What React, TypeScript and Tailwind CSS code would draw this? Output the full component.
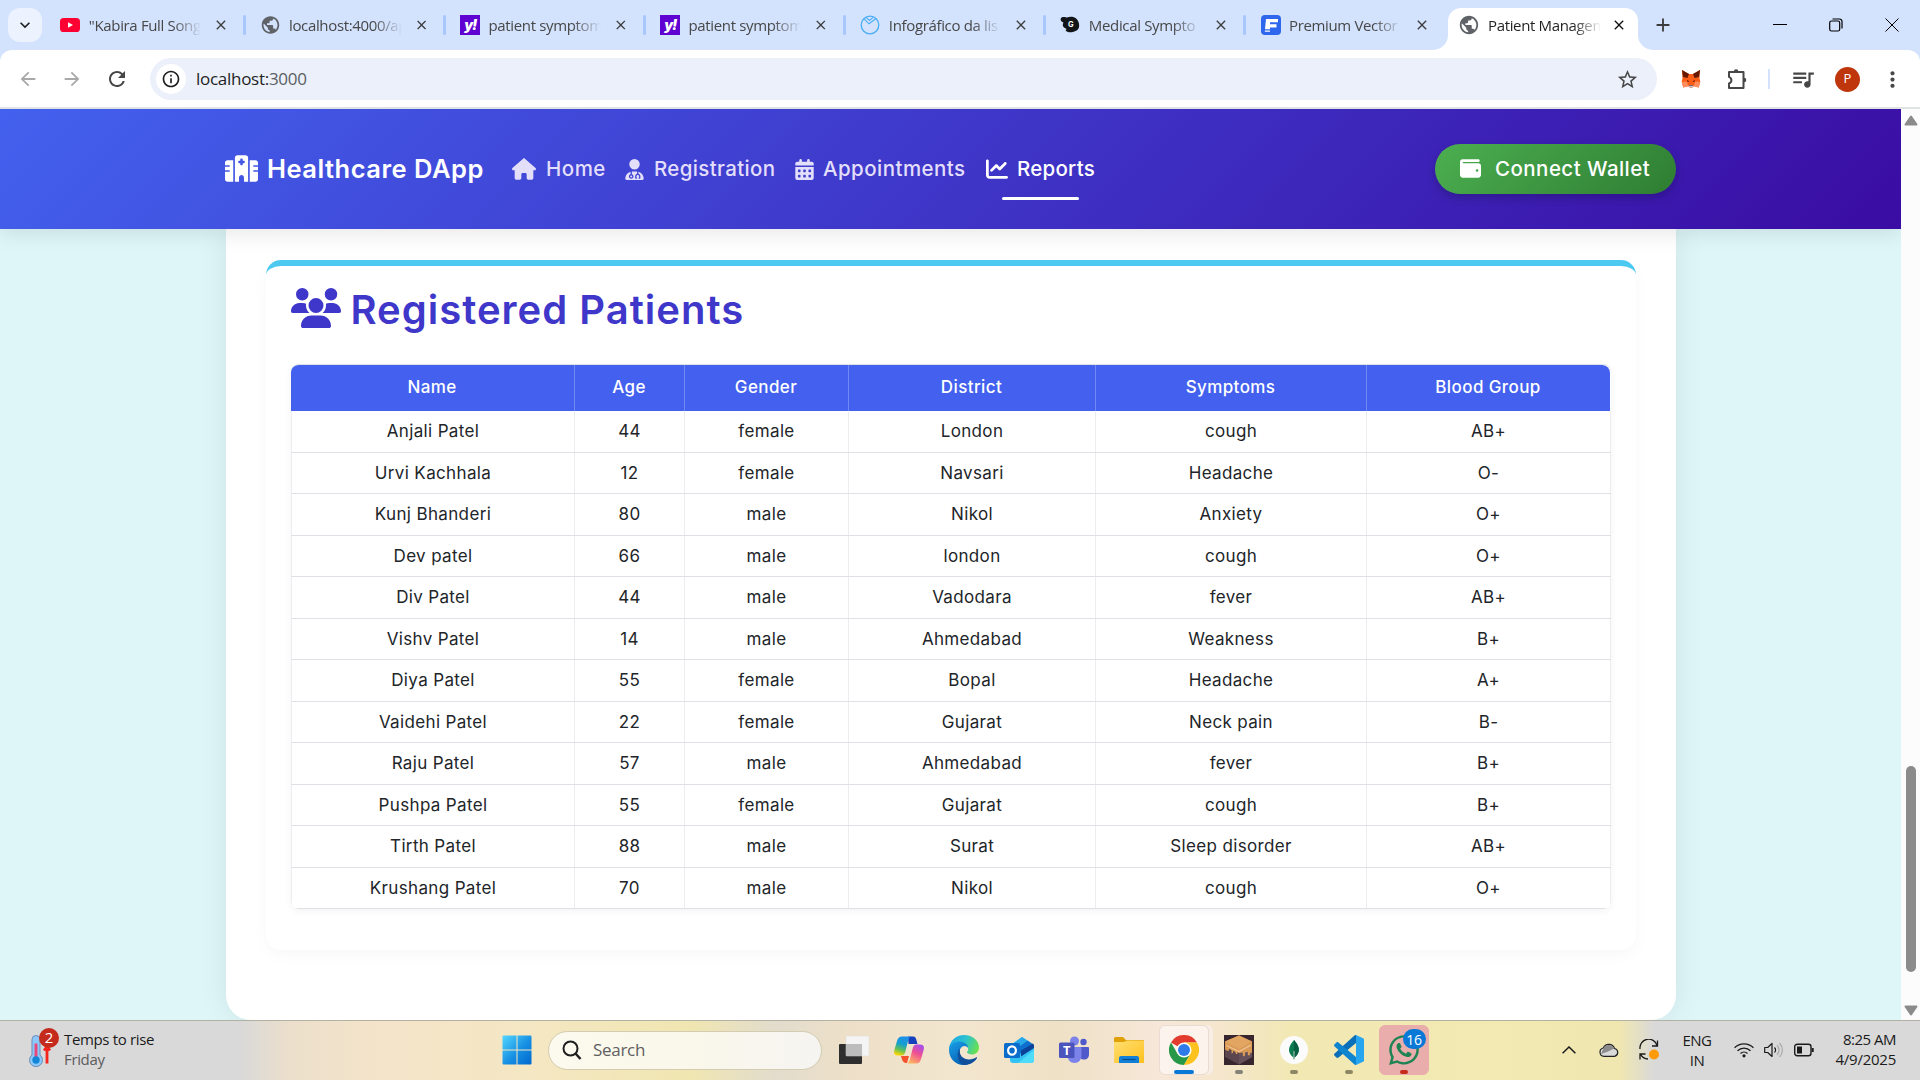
import type { ReactNode } from "react";
import {
  FaCalendarDays,
  FaChartLine,
  FaHospital,
  FaHouse,
  FaUserDoctor,
  FaUsers,
  FaWallet,
  FaWhatsapp,
} from "react-icons/fa6";
import {
  MdAdd,
  MdArrowBack,
  MdArrowForward,
  MdClose,
  MdInfoOutline,
  MdKeyboardArrowDown,
  MdMoreVert,
  MdPublic,
  MdQueueMusic,
  MdRefresh,
  MdStarBorder,
} from "react-icons/md";

/* ---------- favicons ---------- */

const YouTubeIcon = () => (
  <svg viewBox="0 0 20 20" className="size-5">
    <rect y="3" width="20" height="14" rx="3.6" fill="#ff0033" />
    <path d="M8 7.2v5.6l5-2.8z" fill="#fff" />
  </svg>
);

const YahooIcon = () => (
  <div className="flex size-5 items-center justify-center bg-[#5f01d1] pb-0.5 font-['Inter'] text-[14px] font-black italic tracking-[-1px] text-white">
    y!
  </div>
);

const RingIcon = () => (
  <svg viewBox="0 0 20 20" className="size-5" fill="none" stroke="#4badf5" strokeWidth="1.3">
    <circle cx="10" cy="10" r="8.8" />
    <path d="M4 3.800L9 8.800 15.800 3.800M6 2.400L9.500 5.500 13.500 2.200" strokeWidth="1.100" />
  </svg>
);

const BlackBlobIcon = () => (
  <svg viewBox="0 0 20 20" className="size-5">
    <path d="M1 3c2-2 5-.5 6-.4 4-2 10-.6 11.500 4.400 1.500 4 .5 8-3 9-3 1.500-8 2-10-.5 1-.5 1-1 .5-2C2 12.500 2.500 9 3.500 7.500 1.500 7 0 5 1 3z" fill="#111518" />
    <text x="10.800" y="11.500" fontSize="7.500" fontWeight="700" fill="#fff" textAnchor="middle" fontFamily="Inter">G</text>
  </svg>
);

const FreepikIcon = () => (
  <svg viewBox="0 0 20 20" className="size-5">
    <rect width="20" height="20" rx="4" fill="#2f66ee" />
    <path d="M5 4h12v3.300H9v2h6.500v3.200H9v1.700H4z" fill="#fff" />
    <path d="M4 15.500h5v1.300H3.700z" fill="#fff" />
  </svg>
);

const Globe = () => <MdPublic className="size-[22px] text-[#5f6368]" />;

const tabs: { title: string; icon: ReactNode }[] = [
  { title: "\"Kabira Full Song", icon: <YouTubeIcon /> },
  { title: "localhost:4000/ap", icon: <Globe /> },
  { title: "patient symptom", icon: <YahooIcon /> },
  { title: "patient symptom", icon: <YahooIcon /> },
  { title: "Infográfico da lis", icon: <RingIcon /> },
  { title: "Medical Sympto", icon: <BlackBlobIcon /> },
  { title: "Premium Vector", icon: <FreepikIcon /> },
];

function TabTitle({ children, active }: { children: ReactNode; active?: boolean }) {
  return (
    <span
      className={`ml-2 w-[113px] whitespace-nowrap text-[15px] tracking-[-0.35px] mask-r-from-75% mask-r-to-100% ${
        active ? "text-[#1f1f1f]" : "text-[#474747]"
      }`}
    >
      {children}
    </span>
  );
}

function TabStrip() {
  return (
    <div className="flex h-[50px] shrink-0 bg-[#d3e2fd]">
      <div className="ml-2 mt-2 flex size-[34px] items-center justify-center rounded-xl bg-[#ecf2fe]">
        <MdKeyboardArrowDown className="size-5 text-[#1f1f1f]" />
      </div>
      <div className="flex w-[1406px] pl-[4px]">
        {tabs.map((tab, i) => (
          <div key={i} className="flex h-[50px] w-[200px] shrink-0 items-center pl-[14px]">
            <div className="flex w-[21px] justify-center">{tab.icon}</div>
            <TabTitle>{tab.title}</TabTitle>
            <MdClose className="ml-[12px] size-[16px] text-[#3c3c3c]" />
            {i < tabs.length - 1 && <div className="ml-[14px] h-5 w-[3px] rounded bg-[#a8c7fa]" />}
          </div>
        ))}
      </div>
      <div className="relative mt-2 flex h-[42px] w-[190px] items-center rounded-t-[13px] bg-white pb-2 pl-[10px]">
        <svg viewBox="0 0 15 15" className="absolute -left-[15px] bottom-0 size-[15px]">
          <path d="M15 0v15H0A15 15 0 0 0 15 0z" fill="#fff" />
        </svg>
        <svg viewBox="0 0 15 15" className="absolute -right-[15px] bottom-0 size-[15px]">
          <path d="M0 0v15h15A15 15 0 0 1 0 0z" fill="#fff" />
        </svg>
        <Globe />
        <TabTitle active>Patient Managem</TabTitle>
        <MdClose className="ml-[10px] size-[16px] text-[#111]" />
      </div>
      <div className="flex grow items-center">
        <MdAdd className="ml-[14px] size-[22px] text-[#3c3c3c]" />
        <div className="ml-auto flex items-center gap-[42px] pr-[21px] text-black">
          <svg viewBox="0 0 14 14" className="size-[14px]"><path d="M0 6.500h14" stroke="currentColor" /></svg>
          <svg viewBox="0 0 14 14" className="size-[14px]" fill="none" stroke="currentColor" strokeWidth="1.200">
            <rect x=".7" y="3" width="10" height="10" rx="1.800" />
            <path d="M3.500 1h7a2.500 2.500 0 0 1 2.500 2.500v7" />
          </svg>
          <svg viewBox="0 0 14 14" className="size-[14px]"><path d="M.5 .5l13 13M13.500 .5l-13 13" stroke="currentColor" strokeWidth="1" /></svg>
        </div>
      </div>
    </div>
  );
}

const FoxIcon = () => (
  <svg viewBox="0 0 20 20" className="size-5">
    <path d="M1 1l7 4h4l7-4-.5 8 .8 4-1.600 5.500-4.700-1.300-2 1.500H9l-2-1.500-4.700 1.300L.7 13l.8-4z" fill="#ff5c16" />
    <path d="M1 1l7 4-1.500 4L2 8zM19 1l-7 4 1.500 4L18 8z" fill="#661800" />
    <path d="M.7 13L6 12.500 7 17l-4.700 1.500zM19.300 13l-5.300-.5-1 4.500 4.700 1.500z" fill="#ff8d5d" />
    <path d="M6 11l2.500 1.500-2 .3zM14 11l-2.500 1.500 2 .3zM8.300 16h3.400l.3 1.500H8z" fill="#3a0d12" />
    <path d="M7 17l1-.5h4l1 .5-2 1.500H9z" fill="#c0c4cd" />
  </svg>
);

function Toolbar() {
  return (
    <div className="bg-[#d3e2fd]">
      <div className="flex h-[57px] items-center rounded-t-xl bg-white pt-px text-[#474747]">
        <MdArrowBack className="ml-[17px] size-[22px] text-[#a9a9a9]" />
        <MdArrowForward className="ml-[22px] size-[22px] text-[#a9a9a9]" />
        <MdRefresh className="ml-[22px] size-[24px]" />
        <div className="ml-[21px] flex h-[42px] w-[1507px] items-center rounded-full bg-[#ebf0fa] pl-[6px] pr-[18px]">
          <div className="flex size-[30px] items-center justify-center rounded-full bg-white">
            <MdInfoOutline className="size-[20px] text-[#1f1f1f]" />
          </div>
          <span className="ml-[10px] text-[17px] tracking-[-0.28px] text-[#1f1f1f]">
            localhost:<span className="text-[#5a5e63]">3000</span>
          </span>
          <MdStarBorder className="ml-auto size-[23px]" />
        </div>
        <div className="ml-[24px]"><FoxIcon /></div>
        <svg viewBox="0 0 22 22" className="ml-[25px] size-[22px]" fill="none" stroke="currentColor" strokeWidth="2">
          <path d="M3 4h14.500v16H3v-4.500c1.600-.6 2.400-1.800 2.400-3.300S4.600 9.500 3 8.900z" strokeLinejoin="round" />
          <path d="M7.800 3.500a2.300 2.300 0 0 1 4.600 0zM18 9.700a2.300 2.300 0 0 1 0 4.600z" fill="currentColor" stroke="none" />
        </svg>
        <div className="ml-[20px] h-5 w-[2px] bg-[#d3e2fd]" />
        <MdQueueMusic className="ml-[20px] size-[26px]" />
        <div className="ml-[19px] flex size-[25px] items-center justify-center rounded-full bg-[#bf360c] text-[13px] text-white">P</div>
        <MdMoreVert className="ml-[20px] size-[25px]" />
      </div>
      <div className="h-[2px] bg-[#dfe3e3]" />
    </div>
  );
}

/* ---------- web page ---------- */

function NavBar() {
  return (
    <nav className="relative z-10 flex h-[120px] shrink-0 items-center bg-[linear-gradient(135deg,#4361ee,#3a0ca3)] px-[225px] shadow-[0_4px_20px_rgba(0,0,0,0.1)]">
      <FaHospital className="mb-[2px] size-[33px] text-white" />
      <span className="ml-[9px] w-[217px] whitespace-nowrap text-[25.500px] font-semibold tracking-[0.5px] text-white">Healthcare DApp</span>
      <div className="flex grow items-center text-[20.500px] font-medium text-[#e3dffa]">
        <FaHouse className="ml-[28px] size-[24px]" />
        <span className="ml-[10px] w-[60px] tracking-[0.5px]">Home</span>
        <FaUserDoctor className="ml-[18px] size-[21px]" />
        <span className="ml-[9px] w-[121px] tracking-[0.35px]">Registration</span>
        <FaCalendarDays className="ml-[19px] size-[21px]" />
        <span className="ml-[8px] w-[144px] tracking-[0.45px]">Appointments</span>
        <div className="relative ml-[19px] flex items-center text-white">
          <FaChartLine className="size-[22px]" />
          <span className="ml-[9px] w-[78px] tracking-[0.25px]">Reports</span>
          <div className="absolute left-[16px] top-[43px] h-[3px] w-[77px] rounded-full bg-white" />
        </div>
      </div>
      <div className="flex h-[50px] w-[241px] items-center rounded-full bg-[linear-gradient(135deg,#4caf50,#2e7d32)] pl-[25px] text-[20.500px] font-medium text-white shadow-[0_4px_10px_rgba(0,0,0,0.2)]">
        <FaWallet className="mb-px size-[21px]" />
        <span className="ml-[14px] whitespace-nowrap tracking-[0.45px]">Connect Wallet</span>
      </div>
    </nav>
  );
}

const headers = ["Name", "Age", "Gender", "District", "Symptoms", "Blood Group"];
const patients = [
  ["Anjali Patel", "44", "female", "London", "cough", "AB+"],
  ["Urvi Kachhala", "12", "female", "Navsari", "Headache", "O-"],
  ["Kunj Bhanderi", "80", "male", "Nikol", "Anxiety", "O+"],
  ["Dev patel", "66", "male", "london", "cough", "O+"],
  ["Div Patel", "44", "male", "Vadodara", "fever", "AB+"],
  ["Vishv Patel", "14", "male", "Ahmedabad", "Weakness", "B+"],
  ["Diya Patel", "55", "female", "Bopal", "Headache", "A+"],
  ["Vaidehi Patel", "22", "female", "Gujarat", "Neck pain", "B-"],
  ["Raju Patel", "57", "male", "Ahmedabad", "fever", "B+"],
  ["Pushpa Patel", "55", "female", "Gujarat", "cough", "B+"],
  ["Tirth Patel", "88", "male", "Surat", "Sleep disorder", "AB+"],
  ["Krushang Patel", "70", "male", "Nikol", "cough", "O+"],
];

function PatientTable() {
  return (
    <div className="mt-[30px] w-[1320px] overflow-hidden rounded-[8px] border-t border-[#dee2e6] text-center text-[17px] shadow-[0_2px_8px_rgba(0,0,0,0.05)]">
      <div className="grid h-[46px] w-[1319px] grid-cols-[284px_110px_164px_247px_271px_243px] overflow-hidden rounded-tr-[8px] bg-[#4361ee] font-medium tracking-[0.4px] text-white">
        {headers.map((h) => (
          <div key={h} className="flex items-center justify-center border-r border-white/25 pb-px last:border-r-0">{h}</div>
        ))}
      </div>
      {patients.map((row) => (
        <div key={row[0]} className="grid h-[41.500px] grid-cols-[284px_110px_164px_247px_271px_244px] border-b border-[#dee2e6] tracking-[0.35px] text-[#212529]">
          {row.map((cell, i) => (
            <div key={i} className="flex items-center justify-center border-r border-[#ebedf0] pl-px pt-px first:border-l">{cell}</div>
          ))}
        </div>
      ))}
    </div>
  );
}

function PageView() {
  return (
    <div className="flex h-[911px] shrink-0">
      <div className="flex w-[1901px] flex-col overflow-hidden bg-[#def6f8] font-['Inter',sans-serif]">
        <NavBar />
        <main className="mx-auto flex h-[791px] w-[1450px] flex-col rounded-b-[25px] bg-white px-[40px] pt-[31px] shadow-[0_0_30px_rgba(0,0,0,0.08)]">
          <section className="h-[690px] rounded-[15px] border-t-[6px] border-[#4cc9f0] bg-white px-[25px] pt-[14px] shadow-[0_5px_15px_rgba(0,0,0,0.03)]">
            <h2 className="flex h-[54px] items-center gap-[10px] pt-[2px] text-[40px] font-semibold text-[#3f37c9]">
              <FaUsers className="size-[50px]" />
              <span className="whitespace-nowrap pt-[3px] tracking-[1px]">Registered Patients</span>
            </h2>
            <PatientTable />
          </section>
        </main>
      </div>
      <div className="flex grow flex-col items-center bg-[#fcfcfc] pb-[4px] pt-[6px]">
        <svg viewBox="0 0 14 11" className="h-[11px] w-[14px]"><path d="M7 1.500L12.500 9.500H1.500z" fill="#8b8b8b" stroke="#8b8b8b" strokeWidth="2" strokeLinejoin="round" /></svg>
        <div className="mt-[640px] h-[206px] w-[10px] rounded-full bg-[#8b8b8b]" />
        <svg viewBox="0 0 14 11" className="mt-auto h-[11px] w-[14px]"><path d="M7 9.500L12.500 1.500H1.500z" fill="#8b8b8b" stroke="#8b8b8b" strokeWidth="2" strokeLinejoin="round" /></svg>
      </div>
    </div>
  );
}

/* ---------- Windows taskbar ---------- */

const StartIcon = () => (
  <svg viewBox="0 0 30 30" className="size-[30px]">
    <defs>
      <linearGradient id="win" x1="0" y1="0" x2="1" y2="1"><stop stopColor="#54d7ff" /><stop offset=".55" stopColor="#168fe2" /><stop offset="1" stopColor="#0067cf" /></linearGradient>
    </defs>
    <path d="M1.500 .5H14.500V14.500H.5V1.500a1 1 0 0 1 1-1zM15.500 .5h13a1 1 0 0 1 1 1v13h-14zM.5 15.500h14v14h-13a1 1 0 0 1-1-1zM15.500 15.500h14v13a1 1 0 0 1-1 1h-13z" fill="url(#win)" />
  </svg>
);

const TaskViewIcon = () => (
  <svg viewBox="0 0 30 30" className="size-[30px]">
    <rect y="9" width="23" height="20" rx="1" fill="#2e2e2e" />
    <rect x="7" y="1" width="23" height="20" rx="1" fill="#f4f4f4" stroke="#dcdcdc" strokeWidth=".5" />
    <path d="M7 9h16v12H8a1 1 0 0 1-1-1z" fill="#bcbcbc" />
  </svg>
);

const CopilotIcon = () => (
  <svg viewBox="0 0 30 30" className="size-[30px]">
    <defs>
      <linearGradient id="cpA" x1=".6" y1="0" x2=".3" y2="1"><stop stopColor="#1f8fe8" /><stop offset=".4" stopColor="#149fd0" /><stop offset=".7" stopColor="#5cbf5c" /><stop offset="1" stopColor="#ffd500" /></linearGradient>
      <linearGradient id="cpB" x1=".8" y1="0" x2=".3" y2="1"><stop stopColor="#a44cf0" /><stop offset=".45" stopColor="#ee4f94" /><stop offset="1" stopColor="#ffb45e" /></linearGradient>
    </defs>
    <path d="M14 1.500h5c2.500 0 3 2 3.700 4.500L23.500 9h-9z" fill="#153fbd" />
    <path d="M7 21h8l-2 7h-1c-3 0-4-3-5-7z" fill="#f4512c" />
    <path d="M8 1.500h9.500c-2 0-2.800 2-3.500 4.500L11.500 16c-.8 3-1.500 4.500-4 4.500H4c-4 0-4.500-2.500-3.500-6L3 6c1-3 2-4.500 5-4.500z" fill="url(#cpA)" />
    <path d="M22 28.500h-9.500c2 0 2.800-2 3.500-4.500l2.500-10c.8-3 1.500-4.500 4-4.500H26c4 0 4.500 2.500 3.500 6L27 24c-1 3-2 4.500-5 4.500z" fill="url(#cpB)" />
  </svg>
);

const EdgeIcon = () => (
  <svg viewBox="0 0 30 30" className="size-[30px]">
    <defs>
      <linearGradient id="edA" x1="0" y1=".3" x2="1" y2=".6"><stop stopColor="#1fa6e6" /><stop offset=".5" stopColor="#2cc3cf" /><stop offset="1" stopColor="#6be04c" /></linearGradient>
      <linearGradient id="edB" x1="0" y1="0" x2=".6" y2="1"><stop stopColor="#1aa0e8" /><stop offset="1" stopColor="#0560b4" /></linearGradient>
    </defs>
    <path d="M0 14C.5 6 7 0 15 0c9 0 15 6 15 12.500 0 4.500-3.500 7-7 7-3 0-5-1-5-2.200 0-.8 1.200-1.300 1.200-3.300C19.200 10.500 16 8 11 8 5.500 8 1.500 10.500 0 14z" fill="url(#edA)" />
    <path d="M0 15c0-5 5-8.500 10-8.500 5.500 0 9.200 3 9.200 6.500-1-1.300-2.200-2-3.700-2-3 0-5 3-5 6.500 0 6 6 10.500 11 10-2 1.700-4.500 2.500-7 2.500C6 30 0 23 0 15z" fill="url(#edB)" />
    <path d="M11 13.500c-1.500 7 3.500 11 9 11 3 0 5.500-1.200 7-2 .8-.4 1.300.2.900.8C26 26.500 21.500 30 16 30 9 30 6.500 17.500 11 13.500z" fill="#104f9c" />
  </svg>
);

const OutlookIcon = () => (
  <svg viewBox="0 0 30 30" className="size-[30px]">
    <path d="M5 11L18 2l12 8v15a3 3 0 0 1-3 3H9a3 3 0 0 1-3-3z" fill="#33c3f2" />
    <path d="M6 11L18 2l5 3.300L12 14z" fill="#28a8ea" />
    <path d="M12 14L23.500 5.500 30 10v2l-12 8z" fill="#0f6fce" />
    <path d="M17 15.500L29 8.500l1 2v2.500L17 21.500z" fill="#0b4196" />
    <path d="M14 28l16-13v10a3 3 0 0 1-3 3z" fill="#4fdcfa" />
    <rect y="8" width="16" height="15" rx="1.500" fill="#0a6dcc" />
    <ellipse cx="8" cy="15.500" rx="3.900" ry="4.200" fill="none" stroke="#fff" strokeWidth="2.200" />
  </svg>
);

const TeamsIcon = () => (
  <svg viewBox="0 0 30 30" className="size-[30px]">
    <circle cx="24.500" cy="7" r="3.200" fill="#5059c9" />
    <circle cx="15.500" cy="6" r="4.500" fill="#7b83eb" />
    <path d="M20 12h9a1 1 0 0 1 1 1v6.500c0 3-2 5-5 5s-5-2-5-5z" fill="#5059c9" />
    <path d="M9 12h12.500a1 1 0 0 1 1 1v7c0 5-3 8-7 8s-7-3-7-8z" fill="#7b83eb" />
    <rect y="7.500" width="15.500" height="15.500" rx="1.500" fill="#4b53bc" />
    <text x="7.700" y="20" fontSize="13" fontWeight="700" fill="#fff" textAnchor="middle" fontFamily="Open Sans">T</text>
  </svg>
);

const FolderIcon = () => (
  <svg viewBox="0 0 30 30" className="size-[30px]">
    <defs><linearGradient id="fold" x1="0" y1="0" x2="1" y2="1"><stop stopColor="#ffdf72" /><stop offset="1" stopColor="#ffc01f" /></linearGradient></defs>
    <path d="M0 3.500A1.500 1.500 0 0 1 1.500 2H9l3 3h17a1 1 0 0 1 1 1v5H0z" fill="#e0a008" />
    <path d="M0 7h10l3-1.500h17V28H0z" fill="url(#fold)" />
    <path d="M5 28v-5a2 2 0 0 1 2-2h16a2 2 0 0 1 2 2v5z" fill="#1180d6" />
    <path d="M8.500 24.500h13" stroke="#0b4c8a" strokeWidth="1.200" />
  </svg>
);

const ChromeIcon = () => (
  <svg viewBox="0 0 30 30" className="size-[30px]">
    <path d="M15 15L2 7.500A15 15 0 0 1 28 7.500L15 7.500z" fill="#e33b2e" />
    <path d="M2 7.500A15 15 0 0 0 15 30L21.500 18.800 15 15 8.500 18.800z" fill="#279847" />
    <path d="M15 30A15 15 0 0 0 28 7.500H15L21.500 18.800z" fill="#fcc31e" />
    <circle cx="15" cy="15" r="7.500" fill="#fff" />
    <circle cx="15" cy="15" r="6" fill="#2f7bea" />
  </svg>
);

const BlockIcon = () => (
  <svg viewBox="0 0 30 30" className="size-[30px]">
    <rect width="30" height="30" fill="#37262e" />
    <path d="M15 .5L28 6.500V22L15 29.500 1 22V6.500z" fill="#5b4650" />
    <path d="M15 16v13.500L28 22V8.500z" fill="#665059" />
    <path d="M15 .5L28 6.500v11l-1 .8-1-.8v2.500l-1.200.6-1-.8v-3L21 17.500v3l-1 1-1.200-1v-3L15 18l-1.500-1v1.500l-1 .7-1-.7V17L9 16v2l-1.500.5V15L5 14v1.500l-1.500.5L1 14.500v-8z" fill="#d99a56" />
    <path d="M15 .5L28 6.500 15 14 1 6.500z" fill="#e3a662" />
    <path d="M2.500 10.500L15 16.500 27 10" fill="none" stroke="#f2c591" strokeWidth="1.200" />
  </svg>
);

const MongoIcon = () => (
  <svg viewBox="0 0 30 30" className="size-[30px]">
    <circle cx="15" cy="15" r="14" fill="#fbfbfb" />
    <path d="M15 5c4 4.500 5.500 8 4.500 12-.7 2.500-2.500 4.500-4 5.500V24h-1v-1.500c-1.500-1-3.500-3-4.200-5.500C9.500 13 11 9.500 15 5z" fill="#0c7a50" />
    <path d="M15 5c4 4.500 5.500 8 4.500 12-.7 2.500-2.500 4.500-4 5.500H15z" fill="#075e40" />
    <path d="M15 16v9" stroke="#b5c9bd" />
  </svg>
);

const CodeIcon = () => (
  <svg viewBox="0 0 30 30" className="size-[30px]">
    <path d="M22 0l7 3.200c.6.300 1 .8 1 1.500v20.600c0 .7-.4 1.200-1 1.500L22 30z" fill="#27a5ee" />
    <path d="M22 8L4.500 22.500c-.7.600-1.500.5-2.100 0L.6 20.800c-.8-.8-.8-1.700 0-2.400L20.500.5c.5-.5 1-.6 1.500-.5z" fill="#0a6fb9" />
    <path d="M22 22L4.500 7.500c-.7-.6-1.500-.5-2.100 0L.6 9.200c-.8.800-.8 1.700 0 2.400l19.900 17.900c.5.500 1 .6 1.500.5z" fill="#0f85cf" />
  </svg>
);

const apps: { icon: ReactNode; indicator?: string; tile?: string }[] = [
  { icon: <TaskViewIcon /> },
  { icon: <CopilotIcon /> },
  { icon: <EdgeIcon /> },
  { icon: <OutlookIcon /> },
  { icon: <TeamsIcon /> },
  { icon: <FolderIcon /> },
  {
    icon: <ChromeIcon />,
    tile: "bg-[#fdf4f0]/90 border-[#e9dcd2] shadow-[4px_0_0_#f9eee6]",
    indicator: "w-5 bg-[#0a78d6]",
  },
  { icon: <BlockIcon />, indicator: "w-2 bg-[#85827a]" },
  { icon: <MongoIcon />, indicator: "w-2 bg-[#8c8866]" },
  { icon: <CodeIcon />, indicator: "w-2 bg-[#8c8866]" },
  {
    icon: (
      <div className="relative">
        <FaWhatsapp className="size-[34px] text-[#1f8354]" />
        <span className="absolute -top-[4px] left-[16px] flex h-5 w-[23px] items-center justify-center rounded-full bg-[#0a78d6] text-[14px] tracking-tight text-white">16</span>
      </div>
    ),
    tile: "bg-[#e9adab] border-[#e9adab]",
    indicator: "w-2 bg-[#c42b1c]",
  },
];

function TrayIcons() {
  return (
    <div className="flex items-center text-[#1b1b1b]">
      <svg viewBox="0 0 14 8" className="h-2 w-[14px]" fill="none" stroke="currentColor" strokeWidth="1.500"><path d="M.6 7.200L7 1l6.400 6.200" /></svg>
      <svg viewBox="0 0 20 14" className="ml-[23px] h-[14px] w-5">
        <path d="M5 13.300a4.200 4.200 0 0 1-.7-8.300A6 6 0 0 1 15.500 5.500a4 4 0 0 1 .2 7.800z" fill="#dadada" stroke="#222" strokeWidth="1.200" />
        <path d="M4.500 5.200A6 6 0 0 1 15.300 5.500L9 8.500 2 11z" fill="#8b8b8b" />
      </svg>
      <svg viewBox="0 0 22 22" className="ml-[19px] size-[22px]" fill="none" stroke="currentColor" strokeWidth="1.300">
        <path d="M2 10A8.700 8.700 0 0 1 19 6.500M19.500 1.500v5.500h-5.500M10 20A8.700 8.700 0 0 1 2.500 15M2 20.500v-5.500h5.500" />
        <circle cx="16" cy="15.500" r="5" fill="#ff9a0a" stroke="none" />
      </svg>
      <div className="ml-[20px] w-[34px] text-center text-[15px] leading-5 tracking-[-0.5px]">
        <div>ENG</div>
        <div>IN</div>
      </div>
      <svg viewBox="0 0 20 16" className="ml-[20px] h-4 w-5" fill="none" stroke="currentColor" strokeWidth="1.300">
        <path d="M.6 5.800a13.300 13.300 0 0 1 18.800 0M3.500 8.800a9.200 9.200 0 0 1 13 0M6.500 11.500a5 5 0 0 1 7 0" />
        <circle cx="10" cy="13.800" r="1.600" fill="currentColor" stroke="none" />
      </svg>
      <svg viewBox="0 0 20 16" className="ml-[10px] h-4 w-5" fill="none" stroke="currentColor" strokeWidth="1.200">
        <path d="M.7 5.500h3L8 1.500v13L3.700 10.500h-3z" strokeLinejoin="round" />
        <path d="M10.500 5.500a3.500 3.500 0 0 1 0 5" />
        <path d="M13 3.300a6.500 6.500 0 0 1 0 9.400M15.500 1a10 10 0 0 1 0 14" stroke="#aaa" />
      </svg>
      <svg viewBox="0 0 20 14" className="ml-[10px] h-[14px] w-5" fill="none" stroke="currentColor" strokeWidth="1.400">
        <rect x=".7" y="1.200" width="16.300" height="11.500" rx="2.500" />
        <rect x="3" y="3.500" width="5" height="7" fill="currentColor" stroke="none" />
        <path d="M18.700 5v4" strokeWidth="2" />
      </svg>
      <div className="ml-[16px] w-[66px] whitespace-nowrap pb-[3px] text-right text-[15px] leading-5 tracking-[-0.25px]">
        <div className="tracking-[-0.5px]">8:25 AM</div>
        <div>4/9/2025</div>
      </div>
    </div>
  );
}

function Taskbar() {
  return (
    <div className="flex h-[60px] shrink-0 items-center border-t border-[#b4b1a4] bg-[linear-gradient(90deg,#d9d9d9_0px,#d9d9d9_240px,#ecdfcb_290px,#f4e4ca_380px,#f4e7c2_540px,#f0e6b1_690px,#e2dccd_775px,#eee0c8_850px,#f3e6ce_960px,#efe1c6_1060px,#f7e7d9_1160px,#f5e6cd_1220px,#f1e8b4_1290px,#f3e9b2_1500px,#efe6b0_1620px,#d9d9d9_1655px,#d9d9d9_1920px)] pb-px pr-[24px] text-[#1b1b1b]">
      <div className="relative ml-[29px] h-[35px] w-[30px]">
        <svg viewBox="0 0 24 34" className="h-[35px] w-[24px]">
          <path d="M3 6a4 4 0 0 1 8 0v15.500a6.500 6.500 0 1 1-8 0z" fill="#8cc8fa" stroke="#6b8db8" />
          <path d="M7 10v14" stroke="#e8487a" strokeWidth="3" />
          <circle cx="7" cy="26.500" r="3.700" fill="#1486d8" />
          <path d="M18 14v16M15 17l3-4 3 4" stroke="#f5251c" strokeWidth="2.800" fill="none" />
        </svg>
        <span className="absolute -top-[5px] left-[10px] flex size-5 items-center justify-center rounded-full bg-[#c42b1c] text-[15px] text-white">2</span>
      </div>
      <div className="ml-[5px] w-[438px] pb-[3px] text-[15px] leading-5 tracking-[-0.35px]">
        <div>Temps to rise</div>
        <div className="text-[#5c5c5c]">Friday</div>
      </div>
      <StartIcon />
      <div className="ml-[16px] flex h-[39px] w-[274px] items-center rounded-full border border-[#d3ccb0] bg-[linear-gradient(90deg,#fcf9ee,#faf8ea_50%,#f6f4f1)] pl-[13px]">
        <svg viewBox="0 0 20 20" className="size-5" fill="none" stroke="#1f1f1f" strokeWidth="2"><circle cx="8.500" cy="8.500" r="7" /><path d="M13.500 13.500l5 5.500" strokeWidth="2.500" /></svg>
        <span className="ml-[11px] text-[17px] tracking-[-0.3px] text-[#606060]">Search</span>
      </div>
      <div className="ml-[4px] flex">
        {apps.map((app, i) => (
          <div key={i} className="flex w-[55px] justify-center">
            <div className={`relative flex h-[50px] w-[50px] items-center justify-center rounded-md border ${app.tile ?? "border-transparent"}`}>
              {app.icon}
              {app.indicator && <span className={`absolute bottom-0 h-[4px] rounded-full ${app.indicator}`} />}
            </div>
          </div>
        ))}
      </div>
      <div className="ml-auto"><TrayIcons /></div>
    </div>
  );
}

export default function App() {
  return (
    <div className="flex h-[1080px] w-[1920px] flex-col overflow-hidden font-['Open_Sans',sans-serif]">
      <TabStrip />
      <Toolbar />
      <PageView />
      <Taskbar />
    </div>
  );
}
